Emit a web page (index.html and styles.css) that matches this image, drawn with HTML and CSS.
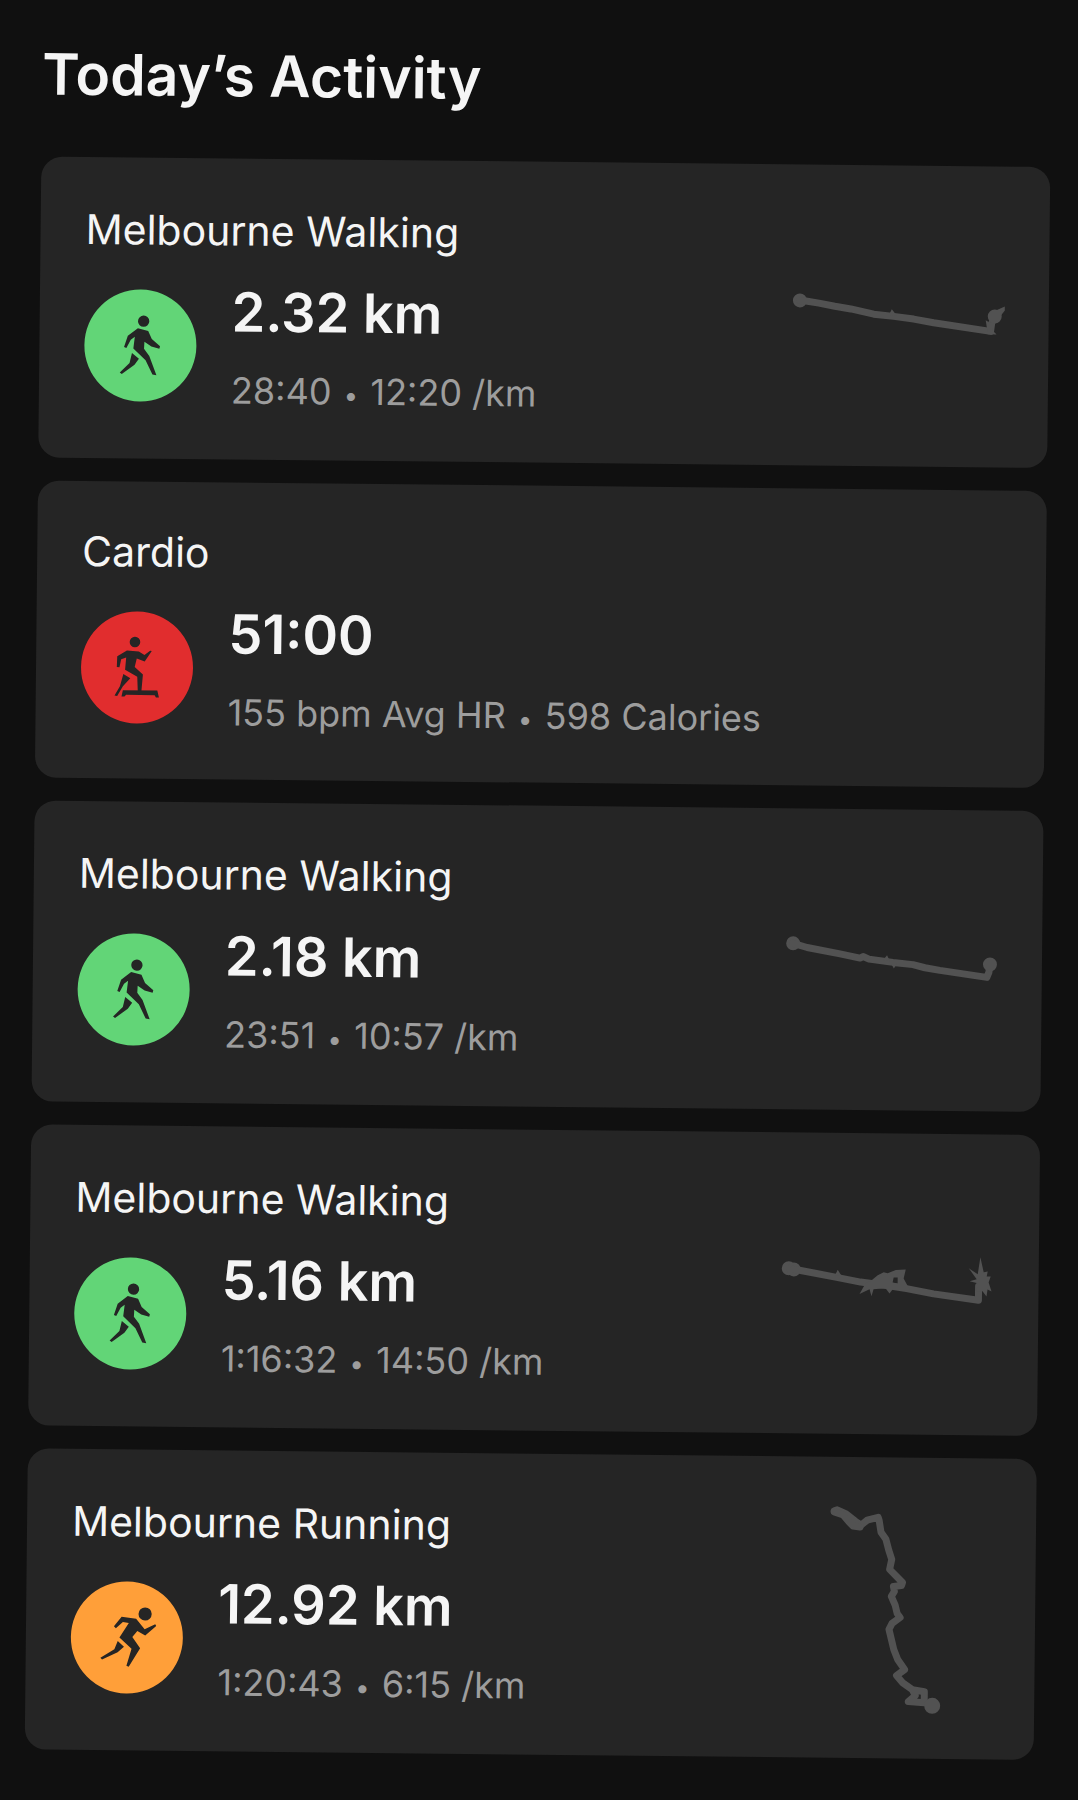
FILE: index.html
```html
<!DOCTYPE html>
<html lang="en">
<head>
    <meta charset="UTF-8">
    <meta name="viewport" content="width=device-width, initial-scale=1.0">
    <title>Today’s Activity</title>
    <link rel="stylesheet" href="styles.css">
</head>
<body>
    <!-- shared activity icons -->
    <svg class="defs" aria-hidden="true">
        <symbol id="walk" viewBox="45 54 336 336">
            <circle cx="222" cy="149" r="17"/>
            <path d="M205 170L236 178L247 202L272 224L270 231L246 225L225 211L224 232L240 253L262 311L250 309L229 266L192 231L196 196L184 205L171 230L164 227L175 193Z"/>
            <path d="M188 245L209 262L196 280L158 308L152 304L181 275Z"/>
        </symbol>
        <symbol id="cardio" viewBox="33 32 338 338">
            <circle cx="195" cy="124" r="16"/>
            <path d="M171 150L207 153L224 163L241 150L246 151L225 183L201 174L195 200L220 222L216 272L205 272L203 229L166 208L169 171L154 177L149 201L141 200L142 168Z"/>
            <path d="M161 221L182 234L160 258L143 288L135 286L151 258Z"/>
            <path d="M160 270H264L269 291H260L256 284H170L165 289H156Z"/>
        </symbol>
        <symbol id="run" viewBox="31 34 339 339">
            <circle cx="255" cy="132" r="20"/>
            <path d="M184 141L228 147L254 178L286 163L289 168L256 197L232 184L217 202L241 236L207 292L200 289L215 238L178 204L206 160L188 157L167 176L161 170Z"/>
            <path d="M173 215L192 232L173 249L126 271L121 266L163 240Z"/>
        </symbol>
    </svg>

    <main class="screen">
        <h1>Today’s Activity</h1>

        <div class="list">
            <article class="card">
                <div class="info">
                    <h2>Melbourne Walking</h2>
                    <div class="row">
                        <span class="badge green"><svg><use href="#walk"/></svg></span>
                        <div class="stats">
                            <p class="value">2.32 km</p>
                            <p class="meta">28:40 <span class="sep">•</span> 12:20 /km</p>
                        </div>
                    </div>
                </div>
                <svg class="route" viewBox="0 0 212 211">
                    <circle class="dot" cx="8" cy="91" r="7"/>
                    <path class="line" d="M8 91L14 91.5L27 93.5L43 96.5L59 99L82 104L102 106L122 108.5L142 112L199 120L200 112L203 105"/>
                    <path class="dot" d="M97 105L100 99L105 105ZM196 121L194 109L201 113L201 119L205 123L196 123Z"/>
                    <path class="dot" d="M204 99L213 95V99L207 107Z"/>
                    <circle class="dot" cx="203" cy="105" r="7"/>
                </svg>
            </article>

            <article class="card">
                <div class="info">
                    <h2>Cardio</h2>
                    <div class="row">
                        <span class="badge red"><svg><use href="#cardio"/></svg></span>
                        <div class="stats">
                            <p class="value">51:00</p>
                            <p class="meta">155 bpm Avg HR <span class="sep">•</span> 598 Calories</p>
                        </div>
                    </div>
                </div>
            </article>

            <article class="card">
                <div class="info">
                    <h2>Melbourne Walking</h2>
                    <div class="row">
                        <span class="badge green"><svg><use href="#walk"/></svg></span>
                        <div class="stats">
                            <p class="value">2.18 km</p>
                            <p class="meta">23:51 <span class="sep">•</span> 10:57 /km</p>
                        </div>
                    </div>
                </div>
                <svg class="route" viewBox="0 0 212 211">
                    <circle class="dot" cx="8" cy="90" r="7"/>
                    <path class="line" d="M8 90L22 94L55 100L75 104L78 102.5L84 105L108 108L128 110L140 113L155 115.5L202 122L204 117L205 109"/>
                    <path class="dot" d="M98 106L102 101L105 107ZM106 109L109 114L112 109Z"/>
                    <circle class="dot" cx="205" cy="109" r="7"/>
                </svg>
            </article>

            <article class="card">
                <div class="info">
                    <h2>Melbourne Walking</h2>
                    <div class="row">
                        <span class="badge green"><svg><use href="#walk"/></svg></span>
                        <div class="stats">
                            <p class="value">5.16 km</p>
                            <p class="meta">1:16:32 <span class="sep">•</span> 14:50 /km</p>
                        </div>
                    </div>
                </div>
                <svg class="route" viewBox="0 0 212 211">
                    <circle class="dot" cx="7" cy="91" r="7"/>
                    <circle class="dot" cx="12" cy="92" r="7"/>
                    <path class="line" d="M12 92L19 93L55 99.5L79 104L112 108L125 110L152 115L197 121V107"/>
                    <path class="dot" fill-rule="evenodd" d="M53 98L56 92L60 98ZM84 105L78 116L88 111L90 118L92 111L104 110L108 115L111 111L128 111L122 100L124 91L114 91.5L106 95L102 94L96 97L90 102ZM112 99L116 99L116 105L111 104Z"/>
                    <path class="dot" d="M198.5 78L202 93L206 92L205 97L209 97L207 103L210 112L206 110L205 117L201 112L195 112L196 104L188 102L195 100L187 89L196 95Z"/>
                </svg>
            </article>

            <article class="card">
                <div class="info">
                    <h2>Melbourne Running</h2>
                    <div class="row">
                        <span class="badge orange"><svg><use href="#run"/></svg></span>
                        <div class="stats">
                            <p class="value">12.92 km</p>
                            <p class="meta">1:20:43 <span class="sep">•</span> 6:15 /km</p>
                        </div>
                    </div>
                </div>
                <svg class="route" viewBox="0 0 212 211">
                    <path class="line" d="M55 9L58 8L67 12L76 19L82 23L88 18L99 15L100 18L102 30L107 37L110 48L113 57L111 67L124 80L123 83L115 84L116 89L113 94L117 103L119 111L122 115L114 121L111 127L116 147L120 157L127 167L119 173L125 180L135 187L147 189V200L131 199L138 193L135 187"/>
                    <path class="line" d="M55 10L64 13L70 20L74 24L81 25"/>
                    <circle class="dot" cx="155" cy="203" r="8"/>
                </svg>
            </article>
        </div>
    </main>
</body>
</html>
```

FILE: styles.css
```css
* {
    box-sizing: border-box;
}
body {
    margin: 0;
    background-color: #101010;
    color: #f5f5f5;
    font-family: Inter, "Liberation Sans", sans-serif;
    overflow: hidden;
}
h1, h2, p {
    margin: 0;
}
.defs {
    display: none;
}
/* whole screen leans slightly clockwise */
.screen {
    padding: 38px 26px 40px 43px;
    transform: rotate(0.6deg);
    transform-origin: 0 0;
}
h1 {
    margin-bottom: 46px;
    font-size: 57px;
    font-weight: 600;
    line-height: 72px;
}
.list {
    display: flex;
    flex-direction: column;
    gap: 23px;
}
.card {
    display: flex;
    align-items: center;
    justify-content: space-between;
    padding: 45px;
    background-color: #252525;
    border-radius: 21px;
}
h2 {
    margin-bottom: 24px;
    font-size: 41px;
    font-weight: 400;
    line-height: 50px;
}
.row {
    display: flex;
    align-items: center;
    gap: 35px;
}
.badge {
    flex: none;
    width: 112px;
    height: 112px;
    border-radius: 50%;
}
.badge svg {
    display: block;
    width: 100%;
    height: 100%;
    fill: #252525;
}
.green {
    background-color: #62d577;
}
.red {
    background-color: #e12d2e;
}
.orange {
    background-color: #ff9f39;
}
.value {
    margin-bottom: 23px;
    font-size: 54px;
    font-weight: 600;
    line-height: 66px;
}
.meta {
    color: #9d9d9d;
    font-size: 36px;
    line-height: 44px;
}
.sep {
    margin: 0 2px;
    font-size: 26px;
    line-height: 1;
}
.route {
    flex: none;
    width: 212px;
    height: 211px;
    overflow: visible;
}
.line {
    fill: none;
    stroke: #525252;
    stroke-width: 7;
    stroke-linecap: round;
    stroke-linejoin: round;
}
.dot {
    fill: #525252;
}
```
